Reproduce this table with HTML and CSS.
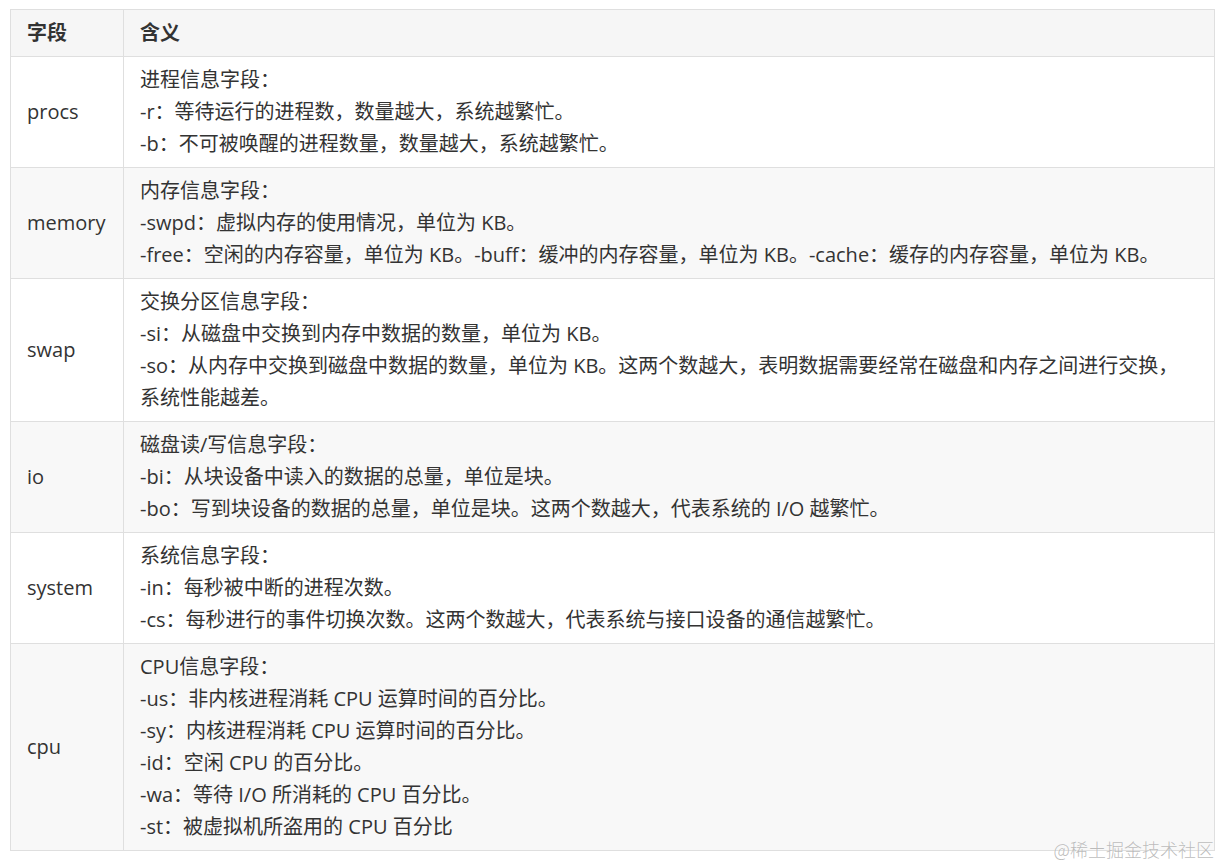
FILE: index.html
```html
<!DOCTYPE html>
<html lang="zh-CN">
<head>
    <meta charset="UTF-8">
    <title>vmstat 字段说明</title>
    <link rel="stylesheet" href="styles.css">
</head>
<body>
    <div class="page">
        <table class="fields">
            <thead>
                <tr>
                    <th class="name">字段</th>
                    <th>含义</th>
                </tr>
            </thead>
            <tbody>
                <tr>
                    <td class="name">procs</td>
                    <td>进程信息字段：<br>-r：等待运行的进程数，数量越大，系统越繁忙。<br>-b：不可被唤醒的进程数量，数量越大，系统越繁忙。</td>
                </tr>
                <tr>
                    <td class="name">memory</td>
                    <td>内存信息字段：<br>-swpd：虚拟内存的使用情况，单位为 KB。<br>-free：空闲的内存容量，单位为 KB。-buff：缓冲的内存容量，单位为 KB。-cache：缓存的内存容量，单位为 KB。</td>
                </tr>
                <tr>
                    <td class="name">swap</td>
                    <td>交换分区信息字段：<br>-si：从磁盘中交换到内存中数据的数量，单位为 KB。<br>-so：从内存中交换到磁盘中数据的数量，单位为 KB。这两个数越大，表明数据需要经常在磁盘和内存之间进行交换，<br>系统性能越差。</td>
                </tr>
                <tr>
                    <td class="name">io</td>
                    <td>磁盘读/写信息字段：<br>-bi：从块设备中读入的数据的总量，单位是块。<br>-bo：写到块设备的数据的总量，单位是块。这两个数越大，代表系统的 I/O 越繁忙。</td>
                </tr>
                <tr>
                    <td class="name">system</td>
                    <td>系统信息字段：<br>-in：每秒被中断的进程次数。<br>-cs：每秒进行的事件切换次数。这两个数越大，代表系统与接口设备的通信越繁忙。</td>
                </tr>
                <tr>
                    <td class="name">cpu</td>
                    <td>CPU信息字段：<br>-us：非内核进程消耗 CPU 运算时间的百分比。<br>-sy：内核进程消耗 CPU 运算时间的百分比。<br>-id：空闲 CPU 的百分比。<br>-wa：等待 I/O 所消耗的 CPU 百分比。<br>-st：被虚拟机所盗用的 CPU 百分比</td>
                </tr>
            </tbody>
        </table>
        <div class="watermark">@稀土掘金技术社区</div>
    </div>
</body>
</html>
```

FILE: styles.css
```css
body {
    margin: 0;
    background: #ffffff;
    color: #333333;
    font-family: "Open Sans", "Noto Sans CJK SC", sans-serif;
}
.page {
    position: relative;
    padding: 9px 6px 0 10px;
    height: 853px;
}
.fields {
    width: 1205px;
    border-collapse: collapse;
    font-size: 20px;
    line-height: 32px;
}
.fields th,
.fields td {
    border: 1px solid #dfdfdf;
    padding: 7px 17px 7px 16px;
    text-align: left;
    vertical-align: middle;
}
.fields th {
    background: #f6f6f6;
    font-weight: bold;
}
.fields .name {
    width: 79px;
}
.fields tbody tr:nth-child(even) td {
    background: #f8f8f8;
}
.watermark {
    position: absolute;
    right: 7px;
    bottom: 1px;
    font-family: "Noto Sans CJK SC", sans-serif;
    font-weight: 300;
    font-size: 18px;
    line-height: 24px;
    color: rgba(120, 120, 120, 0.5);
    text-shadow: 0 0 1px #ffffff;
}
```
